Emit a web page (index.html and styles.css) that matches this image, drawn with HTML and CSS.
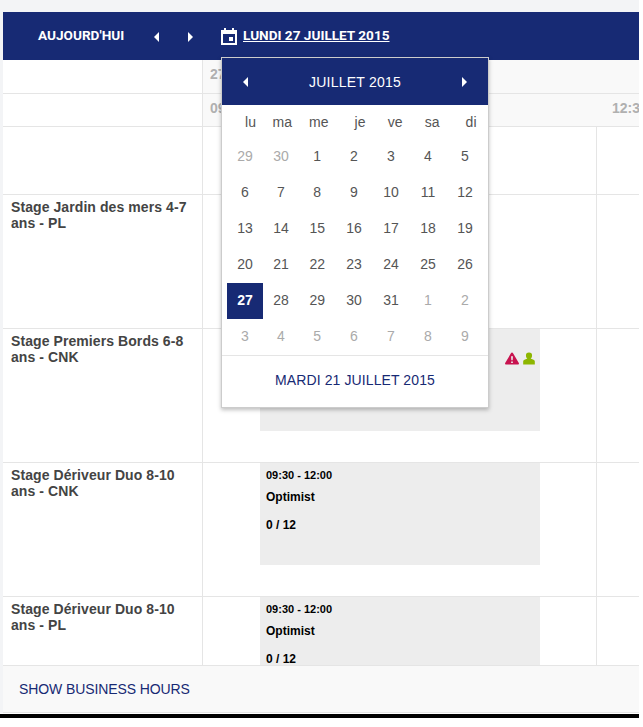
FILE: index.html
```html
<!DOCTYPE html>
<html>
<head>
    <meta name="viewport" content="width=device-width, initial-scale=1.0">
    <link rel="stylesheet" href="styles.css">
</head>
<body>
    <div class="scheduler">
        <div class="toolbar">
            <a class="today-btn">AUJOURD'HUI</a>
            <button class="nav-btn nav-prev"><svg width="5" height="10" viewBox="0 0 5 10"><path d="M5 0 V10 L0 5 Z"/></svg></button>
            <button class="nav-btn nav-next"><svg width="5" height="10" viewBox="0 0 5 10"><path d="M0 0 V10 L5 5 Z"/></svg></button>
            <a class="date-link">
                <svg class="date-icon" width="16" height="17" viewBox="0 0 16 17"><path fill-rule="evenodd" d="M3 0h2v2h6V0h2v2h3v15H0V2h3zM2 6v9h12V6zM8 9h4v4H8z"/></svg>
                <span>LUNDI 27 JUILLET 2015</span>
            </a>
        </div>

        <div class="head-row">
            <div class="label-cell"></div>
            <div class="head-cell">27/07</div>
        </div>
        <div class="head-row">
            <div class="label-cell"></div>
            <div class="head-cell head-times">
                <span class="time-a">09:30</span>
                <span class="time-b">12:30</span>
            </div>
        </div>

        <div class="rows">
            <div class="row row-short">
                <div class="label-cell"></div>
                <div class="slot-a"></div>
                <div class="slot-b"></div>
            </div>
            <div class="row">
                <div class="label-cell">Stage Jardin des mers 4-7 ans - PL</div>
                <div class="slot-a"></div>
                <div class="slot-b"></div>
            </div>
            <div class="row">
                <div class="label-cell">Stage Premiers Bords 6-8 ans - CNK</div>
                <div class="slot-a">
                    <div class="event">
                        <div class="event-icons">
                            <svg width="14" height="13" viewBox="0 0 15 13"><path fill="#c8134f" fill-rule="evenodd" d="M7.500 0c.5 0 .8.3 1 .7l6.300 10.600c.4.800 0 1.700-1 1.700H1.200c-1 0-1.400-.9-1-1.700L6.500.7c.2-.4.500-.7 1-.7zM6.500 4l.3 4.500h1.400L8.500 4zM6.600 9.700v1.700h1.800V9.700z"/></svg>
                            <svg width="12" height="13" viewBox="0 0 13 13"><path fill="#8db600" d="M6.500 0a3.300 3.300 0 0 1 3.300 3.500c0 1.300-.6 2.500-1.500 3.100l3 1.200c1 .4 1.500 1 1.500 2V13H.2V9.800c0-1 .5-1.600 1.500-2l3-1.200C3.800 6 3.200 4.800 3.200 3.500A3.300 3.300 0 0 1 6.500 0z"/></svg>
                        </div>
                    </div>
                </div>
                <div class="slot-b"></div>
            </div>
            <div class="row">
                <div class="label-cell">Stage Dériveur Duo 8-10 ans - CNK</div>
                <div class="slot-a">
                    <div class="event">
                        <div class="event-time">09:30 - 12:00</div>
                        <div class="event-name">Optimist</div>
                        <div class="event-count">0 / <b>12</b></div>
                    </div>
                </div>
                <div class="slot-b"></div>
            </div>
            <div class="row">
                <div class="label-cell">Stage Dériveur Duo 8-10 ans - PL</div>
                <div class="slot-a">
                    <div class="event">
                        <div class="event-time">09:30 - 12:00</div>
                        <div class="event-name">Optimist</div>
                        <div class="event-count">0 / <b>12</b></div>
                    </div>
                </div>
                <div class="slot-b"></div>
            </div>
        </div>

        <div class="footer">SHOW BUSINESS HOURS</div>

        <div class="calendar-popup">
            <div class="cal-head">
                <svg width="5" height="10" viewBox="0 0 5 10"><path d="M5 0 V10 L0 5 Z"/></svg>
                <span>JUILLET 2015</span>
                <svg width="5" height="10" viewBox="0 0 5 10"><path d="M0 0 V10 L5 5 Z"/></svg>
            </div>
            <div class="cal-grid" id="calGrid">
                <div class="wd">lu</div><div class="wd">ma</div><div class="wd">me</div><div class="wd">je</div><div class="wd">ve</div><div class="wd">sa</div><div class="wd">di</div>
                <div class="day muted">29</div><div class="day muted">30</div><div class="day">1</div><div class="day">2</div><div class="day">3</div><div class="day">4</div><div class="day">5</div>
                <div class="day">6</div><div class="day">7</div><div class="day">8</div><div class="day">9</div><div class="day">10</div><div class="day">11</div><div class="day">12</div>
                <div class="day">13</div><div class="day">14</div><div class="day">15</div><div class="day">16</div><div class="day">17</div><div class="day">18</div><div class="day">19</div>
                <div class="day">20</div><div class="day">21</div><div class="day">22</div><div class="day">23</div><div class="day">24</div><div class="day">25</div><div class="day">26</div>
                <div class="day selected">27</div><div class="day">28</div><div class="day">29</div><div class="day">30</div><div class="day">31</div><div class="day muted">1</div><div class="day muted">2</div>
                <div class="day muted">3</div><div class="day muted">4</div><div class="day muted">5</div><div class="day muted">6</div><div class="day muted">7</div><div class="day muted">8</div><div class="day muted">9</div>
            </div>
            <div class="cal-foot">MARDI 21 JUILLET 2015</div>
        </div>
    </div>
    <div class="black-bar"></div>
</body>
</html>
```

FILE: styles.css
```css
* {margin: 0; padding: 0; box-sizing: border-box;}

html, body {
    background: #fff;
}

body {
    font-family: "Liberation Sans", Arial, sans-serif;
    font-size: 14px;
    color: #444;
    height: 727px;
    overflow: hidden;
}

.scheduler {
    width: 639px;
    padding: 12px 0 0 3px;
    background: #f3f4f6;
    position: relative;
}

.toolbar {
    height: 48px;
    background: #172a74;
    display: flex;
    align-items: center;
    color: #fff;
    font-family: Roboto, sans-serif;
    font-weight: 700;
    font-size: 13.6px;
}

.today-btn {
    margin: 0 0 2px 35px;
    width: 88px;
    white-space: nowrap;
}

.nav-btn {
    width: 34px;
    background: none;
    border: none;
    display: flex;
    justify-content: center;
    margin-top: 2px;
}

.nav-btn svg {
    fill: #fff;
}

.nav-prev {
    margin-left: 13px;
}

.date-link {
    margin-left: 14px;
    display: flex;
    align-items: center;
    gap: 6px;
}

.date-icon {
    fill: #fff;
}

.date-link span {
    text-decoration: underline;
    margin-bottom: 2px;
}

.head-row {
    display: flex;
    height: 34px;
    background: #fff;
    border-bottom: 1px solid #e5e5e5;
}

.head-row + .head-row {
    height: 33px;
}

.label-cell {
    width: 200px;
    flex-shrink: 0;
    border-right: 1px solid #e5e5e5;
    background: #fff;
    padding: 4px 8px;
    font-weight: 700;
    line-height: 16px;
    font-size: 14px;
    letter-spacing: 0.08px;
    color: #444;
}

.head-cell {
    flex: 1;
    min-width: 0;
    overflow: hidden;
    white-space: nowrap;
    background: #f9f9f9;
    color: #b0b0b0;
    font-weight: 700;
    padding: 6px 7px;
    line-height: 16px;
    font-size: 14px;
}

.head-times {
    display: flex;
}

.time-a {
    width: 402px;
    flex-shrink: 0;
}

.rows {
    height: 538px;
    overflow: hidden;
    background: #fff;
}

.row {
    display: flex;
    height: 134px;
    border-bottom: 1px solid #e5e5e5;
}

.row-short {
    height: 68px;
}

.slot-a {
    width: 394px;
    padding-left: 57px;
    border-right: 1px solid #e5e5e5;
    flex-shrink: 0;
}

.slot-b {
    flex: 1;
}

.event {
    width: 280px;
    height: 102px;
    background: #ededed;
    padding: 5px 6px;
    color: #000;
    position: relative;
}

.event-time {
    font-size: 11px;
    font-weight: 700;
    line-height: 14px;
}

.event-name {
    font-size: 12px;
    font-weight: 700;
    line-height: 14px;
    margin-top: 8px;
}

.event-count {
    font-size: 12px;
    font-weight: 700;
    line-height: 14px;
    margin-top: 14px;
}

.event-icons {
    position: absolute;
    top: 23px;
    right: 5px;
    display: flex;
    gap: 4px;
}

.footer {
    height: 48px;
    background: #f9f9f9;
    border-top: 1px solid #e5e5e5;
    border-bottom: 1px solid #e5e5e5;
    padding-left: 16px;
    display: flex;
    align-items: center;
    color: #172a74;
    font-size: 14px;
    letter-spacing: -0.1px;
}

.black-bar {
    width: 639px;
    height: 4px;
    background: #000;
    margin-top: 1px;
}

.calendar-popup {
    position: absolute;
    top: 57px;
    left: 221px;
    width: 268px;
    height: 351px;
    background: #fff;
    border: 1px solid #ccc;
    box-shadow: 0 2px 4px rgba(0,0,0,0.25);
}

.cal-head {
    height: 47px;
    background: #172a74;
    color: #fff;
    font-size: 14px;
    letter-spacing: 0.25px;
    display: flex;
    align-items: center;
    justify-content: space-between;
    padding: 0 21px;
}

.cal-head svg {
    fill: #fff;
}

.cal-grid {
    display: grid;
    grid-template-columns: 36px 36px 36.5px 37px 37px 37px 37px;
    grid-template-rows: 34px;
    grid-auto-rows: 36px;
    padding: 0 5px;
    border-bottom: 1px solid #e5e5e5;
    height: 251px;
}

.wd {
    text-align: right;
    padding-right: 7px;
    line-height: 34px;
    color: #555;
}

.day {
    text-align: center;
    line-height: 34px;
    color: #555;
}

.day.muted {
    color: #aaa;
}

.day.selected {
    background: #172a74;
    color: #fff;
    font-weight: 700;
    width: 36px;
}

.cal-foot {
    text-align: center;
    line-height: 49px;
    color: #172a74;
    font-size: 14px;
    letter-spacing: 0.1px;
}
```
